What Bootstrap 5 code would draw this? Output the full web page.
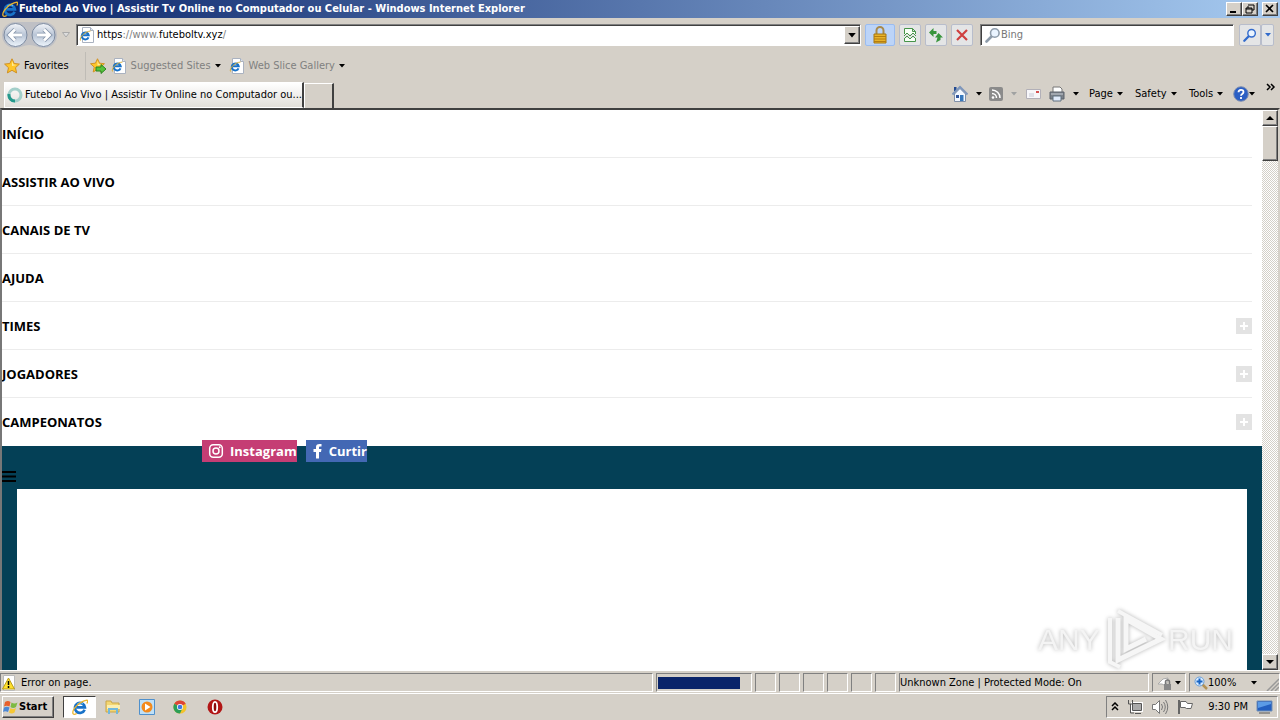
<!DOCTYPE html>
<html lang="pt-BR">
<head>
<meta charset="utf-8">
<meta name="viewport" content="width=device-width, initial-scale=1">
<title>Futebol Ao Vivo | Assistir Tv Online no Computador ou Celular</title>
<link href="https://cdn.jsdelivr.net/npm/bootstrap@5.3.0/dist/css/bootstrap.min.css" rel="stylesheet">
<style>
:root{--face:#d5d0c8;--shade:#808080;--dark:#404040}
body{font:11px/14px "DejaVu Sans Condensed","DejaVu Sans",sans-serif;color:#000;background:var(--face)}
button{font:inherit;color:inherit;background:none;border:0;padding:0;white-space:nowrap}
svg{display:block;flex:none}
.desktop{height:100vh;overflow:hidden}
.titlebar{height:18px;background:linear-gradient(90deg,#0a246a,#a6caf0);color:#fff;font-weight:700;padding:0 2px}
.raised{background:var(--face);border:1px solid;border-color:#fff var(--dark) var(--dark) #fff;box-shadow:inset -1px -1px var(--shade)}
.sunken{border:1px solid;border-color:var(--shade) #fff #fff var(--shade)}
.winbtn{width:16px;height:14px}
.navrow{height:34px;padding:0 6px 0 2px}
.field{height:22px;background:#fff;border:1px solid;border-color:var(--shade) #fff #fff var(--shade);box-shadow:inset 1px 1px var(--dark)}
.field input{border:0;outline:0;background:none;min-width:0;padding:0;font:inherit}
.address{margin-left:2px;padding-left:2px;gap:2px}
.dropper{width:16px;height:18px}
.host{color:#808080}
.host b{font-weight:400;color:#000}
.searchbox{width:254px;margin:0 5px 0 7px}
.searchbox svg{color:#8e9cab}
.searchbox input{color:#777}
.searchbox input::placeholder{color:#777;opacity:1}
.tool{width:22px;height:22px;border:1px solid #b8bdcb;border-radius:2px;background:#e4e5e6;margin-right:4px}
.blue{color:#326bcc}.slim{width:13px}
.lockbtn{width:30px;background:#bcd4f8;border-color:#9abcf0}
.favrow{height:28px;padding-left:4px;color:#808080}
.tabrow{height:28px;padding-left:4px}
.pagetab{width:300px;height:26px;padding-left:2px;gap:2px;background:linear-gradient(#fff,#e2dfda);border:1px solid #fff;border-right:2px solid var(--dark)}
.newtab{width:30px;height:25px;border:1px solid #fff;border-right:2px solid var(--dark);border-bottom:0}
.cmd{display:flex;align-items:center;height:22px}
.w14{width:14px}.w23{width:23px}.w33{width:33px}.w37{width:37px}.w40{width:40px}.w44{width:44px}.w46{width:46px}.w54{width:54px}
.view{border:solid;border-width:2px 2px 0;border-color:var(--dark) var(--face) #fff #777;position:relative;min-height:0}
.site{font-family:"Open Sans","Noto Sans",sans-serif;font-size:13px;line-height:20px;font-weight:700;background:#fff}
.menu a{height:48px;border-bottom:1px solid #ececec;margin-right:10px;color:#000;text-decoration:none;text-transform:uppercase}
.menu li:last-child a{border-bottom-color:transparent}
.plus{width:16px;height:16px}
.hero{background:#044056}
.social{margin-top:-6px;padding-left:200px;gap:9px}
.social a{height:22px;color:#fff;text-decoration:none;padding-left:6px;gap:6px}
.insta{background:#c53d74}.fb{background:#4368b4}
.burger{padding:9px 0 7px}
.paper{background:#fff;margin:0 15px}
.scroll{width:16px;background:repeating-conic-gradient(#fff 0 25%,#d4d0c8 0 50%) 0 0/2px 2px}
.scroll button{height:16px;width:16px}
.thumb{height:35px}
.watermark{position:absolute;right:42px;bottom:0;filter:drop-shadow(0 0 2px #b4b4b4)}
.status{height:23px;border-top:1px solid #fff;padding-top:2px;gap:3px}
.status .sunken{height:19px}
.slot{width:21px}
.prog{width:96px;padding:3px 1px}
.prog div{background:#0a246a;width:82px;height:12px}
.zone{width:250px}.prot{width:34px}.zoomer{width:91px}
.taskbar{height:27px;border-top:1px solid #fff;padding:0 2px 1px}
.start{height:22px;width:52px;font-weight:700}
.active-app{width:33px;height:22px;background:#fff;border:1px solid;border-color:var(--dark) #fff #fff var(--dark);margin:0 9px}
.app{width:34px;height:22px}
.tray{width:172px;height:22px}
</style>
</head>
<body>
<svg width="0" height="0" class="position-absolute" aria-hidden="true">
<defs>
<symbol id="ie" viewBox="0 0 16 16"><path d="M12.6 10.7A5 5 0 1 1 12.9 8.3H4.5" fill="none" stroke="#1872c8" stroke-width="2.7"/><path d="M5 5.5A4 4 0 0 1 11 5" fill="none" stroke="#77c6f3" stroke-width="1"/><path d="M1.2 15C-.8 11 7 2.5 15 1.2c1 .3.6 2-.2 3.300M1.2 15c1 .6 2.300.2 3.500-.500" fill="none" stroke="#eab42d" stroke-width="1.300"/></symbol>
<symbol id="iepage" viewBox="0 0 16 16"><path d="M3.500.5h8l3 3v12h-11z" fill="#fff" stroke="#aab2c0"/><path d="M11.500.5v3h3" fill="#dde5ef" stroke="#aab2c0"/><path d="M9.500 10.300A3.500 3.500 0 1 1 9.700 8.300H4" fill="none" stroke="#1872c8" stroke-width="2"/><path d="M1.500 13.500C0 10 6 4.500 11.500 4" fill="none" stroke="#d7ae38"/></symbol>
<symbol id="dn" viewBox="0 0 6 4"><path d="M0 0h6L3 3.500z" fill="currentColor"/></symbol>
<symbol id="star" viewBox="0 0 16 16"><path d="M8 .8l2.200 4.700 5.200.6-3.900 3.600 1.100 5.200L8 12.300l-4.600 2.600 1.100-5.200L.6 6.100l5.200-.6z" fill="#ffc629" stroke="#cf8f23"/><path d="M8 3l1.400 3.500 3.200.4L8 8z" fill="#ffec9a"/></symbol>
<symbol id="glass" viewBox="0 0 16 16"><path d="M1.500 14.500l5-5" stroke="currentColor" stroke-width="2.600" stroke-linecap="round"/><circle cx="9.800" cy="6" r="4.300" fill="#eaf4ff" stroke="currentColor" stroke-width="1.600"/></symbol>
<symbol id="plus" viewBox="0 0 16 16"><path fill="#e3e3e3" d="M0 0h16v16H0z"/><path d="M8 4v8M4 8h8" stroke="#fff" stroke-width="2"/></symbol>
</defs>
</svg>
<div class="desktop d-flex flex-column">
<header>
  <div class="titlebar d-flex align-items-center">
    <svg width="16" height="16"><use href="#ie"/></svg>
    <span class="flex-grow-1 text-nowrap">&#8202;Futebol Ao Vivo | Assistir Tv Online no Computador ou Celular - Windows Internet Explorer</span>
    <button class="winbtn raised" aria-label="Minimize"><svg width="14" height="12"><path d="M3 9h6" stroke="#000" stroke-width="2"/></svg></button>
    <button class="winbtn raised" aria-label="Restore"><svg width="14" height="12"><path d="M5 2h6M5 3v2m6-3v5H9M3 5h6v5H3zM3 6h6" fill="none" stroke="#000"/></svg></button>
    <button class="winbtn raised ms-1" aria-label="Close"><svg width="14" height="12"><path d="M3 2l7 7m0-7L3 9" stroke="#000" stroke-width="1.600"/></svg></button>
  </div>
  <div class="navrow d-flex align-items-center">
    <button aria-label="Back and forward"><svg width="56" height="28"><defs><linearGradient id="orb" x2="0" y2="1"><stop stop-color="#f3f5f9"/><stop offset=".5" stop-color="#b9c5d6"/><stop offset="1" stop-color="#eef5fc"/></linearGradient></defs><path d="M13 1h29a13 13 0 0 1 0 26c-6 0-9-3-14.500-3S19 27 13 27a13 13 0 0 1 0-26z" fill="#bfc0c5"/><g fill="url(#orb)" stroke="#7d8ba1"><circle cx="13.500" cy="14" r="11.500"/><circle cx="41.500" cy="14" r="11.500"/></g><path d="M20 14H8m5-5.500L7.500 14l5.500 5.500M35 14h12m-5-5.500l5.500 5.500-5.500 5.500" fill="none" stroke="#8594aa" stroke-width="4.500"/><path d="M20 14H8m5-5.500L7.500 14l5.500 5.500M35 14h12m-5-5.500l5.500 5.500-5.500 5.500" fill="none" stroke="#fff" stroke-width="2.800"/></svg></button>
    <svg width="8" height="6" viewBox="0 0 8 6" class="mx-1"><path d="M.5.500h7L4 5z" fill="#ddd" stroke="#aaa"/></svg>
    <div class="field address d-flex align-items-center flex-grow-1">
      <svg width="16" height="16"><use href="#iepage"/></svg>
      <a href="#" class="host flex-grow-1 text-decoration-none"><b>https</b>://www.<b>futeboltv.xyz</b>/</a>
      <button class="raised dropper d-flex align-items-center justify-content-center" aria-label="Show addresses"><svg width="8" height="5"><use href="#dn"/></svg></button>
    </div>
    <button class="tool lockbtn ms-1 d-flex align-items-center justify-content-center" aria-label="Security report"><svg width="16" height="18" viewBox="0 0 16 18"><path d="M4.500 9V4.500a3.500 3.500 0 0 1 7 0V9" fill="none" stroke="#a88a4c" stroke-width="2"/><path d="M2 8h12v9H2z" fill="#e8b32a" stroke="#a57611"/><path d="M2 10.500h12M2 13h12M2 15.500h12" stroke="#b47d10"/></svg></button>
    <button class="tool d-flex align-items-center justify-content-center" aria-label="Compatibility view"><svg width="14" height="16"><path d="M1.500 7V1.500h8l3 3V7M1.500 11v3.500h11V11M9.500 1.500v3h3" fill="#f7fff6" stroke="#47944a"/><path d="M1 9l3-3 3 3 3-3 3 3M1 12l3-3 3 3 3-3 3 3" fill="none" stroke="#47944a"/></svg></button>
    <button class="tool d-flex align-items-center justify-content-center" aria-label="Refresh"><svg width="16" height="16"><path d="M5.500 1L1 5.500 5.500 10V7h3V4h-3zM10.500 6l4.500 4.500h-2.500V13L8 15.500 9.500 10.500H7z" fill="#38953c"/></svg></button>
    <button class="tool d-flex align-items-center justify-content-center me-0" aria-label="Stop"><svg width="14" height="14"><path d="M2 2l10 10M12 2L2 12" stroke="#cf3f3f" stroke-width="2.200"/></svg></button>
    <div class="field searchbox d-flex align-items-center ps-1"><svg width="16" height="16"><use href="#glass"/></svg><input type="text" class="flex-grow-1" placeholder="Bing" aria-label="Search"></div>
    <button class="tool blue m-0 d-flex align-items-center justify-content-center" aria-label="Go"><svg width="14" height="14"><use href="#glass"/></svg></button>
    <button class="tool blue slim m-0 d-flex align-items-center justify-content-center" aria-label="Search options"><svg width="6" height="4"><use href="#dn"/></svg></button>
  </div>
  <div class="favrow d-flex align-items-center">
    <button class="d-flex align-items-center text-black gap-1"><svg width="16" height="16"><use href="#star"/></svg>Favorites</button>
    <div class="vr ms-3 me-1"></div>
    <button aria-label="Add to favorites bar"><svg width="17" height="16"><use href="#star" width="15" height="15"/><path d="M6 9h5V6.500l5 4.500-5 4.500V13H6z" fill="#56c23d" stroke="#2b8421"/></svg></button>
    <button class="d-flex align-items-center ms-1 gap-1"><svg width="16" height="16"><use href="#iepage"/></svg>Suggested Sites <svg width="6" height="4" class="text-black"><use href="#dn"/></svg></button>
    <button class="d-flex align-items-center ms-2 gap-1"><svg width="16" height="16"><use href="#iepage"/></svg>Web Slice Gallery <svg width="6" height="4" class="text-black"><use href="#dn"/></svg></button>
  </div>
  <div class="tabrow d-flex align-items-end">
    <button class="pagetab d-flex align-items-center"><svg width="16" height="16"><circle cx="8" cy="8" r="6" fill="none" stroke="#a3cfca" stroke-width="3"/><path d="M2 7a6 6 0 0 0 6 7" fill="none" stroke="#25998c" stroke-width="3"/></svg><span>Futebol Ao Vivo | Assistir Tv Online no Computador ou...</span></button>
    <button class="newtab" aria-label="New tab"></button>
    <nav class="d-flex align-self-center ms-auto" aria-label="Commands">
      <button class="cmd w37 gap-2" aria-label="Home"><svg width="16" height="18" viewBox="0 0 16 18"><path d="M2.500 9v7.500h11V9L8 3.500z" fill="#f3f8ff" stroke="#8090a8"/><path d="M2 2h2.500v4H2z" fill="#234a91"/><path d="M.5 9.500L8 2l7.500 7.500" fill="none" stroke="#7e96bb" stroke-width="2"/><path d="M8 10h3.500v6H8z" fill="#3678bc"/><path d="M4 10h3v3H4z" fill="#2f549b"/></svg><svg width="6" height="4"><use href="#dn"/></svg></button>
      <button class="cmd w37 gap-2" aria-label="Feeds"><svg width="14" height="14"><rect width="14" height="14" rx="2" fill="#8b8b8b"/><circle cx="4" cy="10.500" r="1.300" fill="#fff"/><path d="M3 6.500a4.500 4.500 0 0 1 4.500 4.500M3 3a8 8 0 0 1 8 8" fill="none" stroke="#fff" stroke-width="1.500"/></svg><svg width="6" height="4" class="text-secondary opacity-50"><use href="#dn"/></svg></button>
      <button class="cmd w23" aria-label="Read mail"><svg width="15" height="10"><path d="M.5.500h14v9H.5z" fill="#f7f7fa" stroke="#b2b0b8"/><path d="M10 3h3" stroke="#d45151" stroke-width="2"/><path d="M3 5h5M3 7h5" stroke="#c5c8d5"/></svg></button>
      <button class="cmd w40 gap-2" aria-label="Print"><svg width="16" height="16"><path d="M4 6V1h7l2 2v3" fill="#fff" stroke="#777"/><path d="M1 6h14v7H1z" fill="#7c828a" stroke="#5c636c"/><path d="M2 8h12" stroke="#c7ccd4"/><path d="M4 10h8v5H4z" fill="#e0eafa" stroke="#61707f"/></svg><svg width="6" height="4"><use href="#dn"/></svg></button>
      <button class="cmd w46 gap-1">Page<svg width="6" height="4"><use href="#dn"/></svg></button>
      <button class="cmd w54 gap-1">Safety<svg width="6" height="4"><use href="#dn"/></svg></button>
      <button class="cmd w44 gap-1">Tools<svg width="6" height="4"><use href="#dn"/></svg></button>
      <button class="cmd w33" aria-label="Help"><svg width="16" height="16"><circle cx="8" cy="8" r="7.300" fill="#2b5fc4" stroke="#8190b0"/><path d="M5.500 6.300C5.500 3 10.500 3 10.500 6c0 2-2.500 1.800-2.500 3.700M8 11v2" fill="none" stroke="#fff" stroke-width="1.800"/></svg><svg width="6" height="4"><use href="#dn"/></svg></button>
      <button class="cmd w14 align-items-start" aria-label="More commands"><svg width="10" height="8"><path d="M1 1l3 3-3 3m4-6l3 3-3 3" fill="none" stroke="#000" stroke-width="1.500"/></svg></button>
    </nav>
  </div>
</header>
<main class="view d-flex flex-grow-1">
  <div class="site d-flex flex-column flex-grow-1 overflow-hidden">
    <ul class="menu list-unstyled m-0">
      <li><a href="#" class="d-flex align-items-center">Início</a></li>
      <li><a href="#" class="d-flex align-items-center">Assistir ao vivo</a></li>
      <li><a href="#" class="d-flex align-items-center">Canais de TV</a></li>
      <li><a href="#" class="d-flex align-items-center">Ajuda</a></li>
      <li><a href="#" class="d-flex align-items-center justify-content-between">Times<svg class="plus"><use href="#plus"/></svg></a></li>
      <li><a href="#" class="d-flex align-items-center justify-content-between">Jogadores<svg class="plus"><use href="#plus"/></svg></a></li>
      <li><a href="#" class="d-flex align-items-center justify-content-between">Campeonatos<svg class="plus"><use href="#plus"/></svg></a></li>
    </ul>
    <div class="hero d-flex flex-column flex-grow-1">
      <div class="social d-flex">
        <a href="#" class="insta d-flex align-items-center"><svg width="16" height="16"><rect x="1.700" y="1.700" width="12.600" height="12.600" rx="3.500" fill="none" stroke="#fff" stroke-width="1.500"/><circle cx="8" cy="8" r="3" fill="none" stroke="#fff" stroke-width="1.500"/><circle cx="11.700" cy="4.300" r="1" fill="#fff"/></svg>Instagram</a>
        <a href="#" class="fb d-flex align-items-center"><svg width="11" height="16"><path d="M4 15.500V9H1.500V6H4V4c0-2.500 1.500-3.500 5.500-3v2.500C7.500 3.300 7 3.500 7 4.500V6h2.500L9 9H7v6.500z" fill="#fff"/></svg>Curtir</a>
      </div>
      <button class="burger align-self-start" aria-label="Menu"><svg width="14" height="11"><path d="M0 1h14M0 5.500h14M0 10h14" stroke="#000" stroke-width="2"/></svg></button>
      <div class="paper flex-grow-1"></div>
    </div>
  </div>
  <div class="scroll d-flex flex-column">
    <button class="raised d-flex align-items-center justify-content-center" aria-label="Scroll up"><svg width="8" height="4"><path d="M0 4h8L4 0z"/></svg></button>
    <div class="thumb raised"></div>
    <button class="raised d-flex align-items-center justify-content-center mt-auto" aria-label="Scroll down"><svg width="8" height="4"><path d="M0 0h8L4 4z"/></svg></button>
  </div>
  <svg class="watermark" width="202" height="64"><g fill="#f4f4f4" font-family="Liberation Sans,sans-serif" font-size="30"><text x="4" y="44">ANY</text><text x="134" y="44">RUN</text></g><path d="M84 12v42l43-21-35-20v30l20-10" fill="none" stroke="#f6f6f6" stroke-width="5"/><path d="M76 12v44l10 5M84 5l44 24" fill="none" stroke="#f6f6f6" stroke-width="4"/></svg>
</main>
<footer>
  <div class="status d-flex">
    <div class="sunken flex-grow-1 d-flex align-items-center gap-1"><svg width="16" height="16"><path d="M2.500.5h11v15h-11z" fill="#fff" stroke="#bbb"/><path d="M7.500 3l6 11h-12z" fill="#ffe02b" stroke="#b89b19"/><path d="M7.500 6v4m0 1v2" stroke="#000" stroke-width="1.500"/></svg>Error on page.</div>
    <div class="sunken prog"><div></div></div>
    <div class="sunken slot"></div><div class="sunken slot"></div><div class="sunken slot"></div><div class="sunken slot"></div><div class="sunken slot"></div><div class="sunken slot"></div>
    <div class="sunken zone d-flex align-items-center text-nowrap">Unknown Zone | Protected Mode: On</div>
    <button class="sunken prot d-flex align-items-center justify-content-between px-1" aria-label="InPrivate settings"><svg width="16" height="16"><path d="M1 9l5-5 5-1-2 8-4-2z" fill="#fff" stroke="#aaa"/><path d="M8.500 9V7a2 2 0 0 1 4 0v2" fill="none" stroke="#777" stroke-width="1.500"/><path d="M7 9h7v6H7z" fill="#888"/></svg><svg width="6" height="4"><use href="#dn"/></svg></button>
    <button class="sunken zoomer d-flex align-items-center ps-1"><svg width="14" height="14"><path d="M8 8l5 5" stroke="#b39256" stroke-width="2.500"/><circle cx="5.500" cy="5.500" r="4.500" fill="#d7eaff" stroke="#6a9fd8"/><path d="M5.500 2.500v6m-3-3h6" stroke="#1764c4" stroke-width="2"/></svg><span class="flex-grow-1 text-start">100%</span><svg width="6" height="4" class="me-2"><use href="#dn"/></svg><svg width="14" height="17"><path d="M2 17L14 5M6 17l8-8M10 17l4-4" stroke="#999" stroke-width="1.500"/></svg></button>
  </div>
  <div class="taskbar d-flex align-items-center">
    <button class="start raised d-flex align-items-center"><svg width="16" height="16"><path d="M2 3q3-2 5.500 0L6.500 7.500q-3-1.500-5.500 0z" fill="#e8602c"/><path d="M8.500 3.500q3 2 6 0L13 8q-3 2-5.500 0z" fill="#7dba43"/><path d="M1 8.500q3-1.500 5.500 0L5 13q-3-1.500-5 0z" fill="#4b88d6"/><path d="M7.500 9q2.500 2 5.500 0l-1.500 4.500q-3 2-5.500 0z" fill="#f5c735"/></svg>Start</button>
    <button class="active-app d-flex align-items-center justify-content-center" aria-label="Internet Explorer"><svg width="16" height="16"><use href="#ie"/></svg></button>
    <button class="app d-flex align-items-center" aria-label="Explorer"><svg width="16" height="16"><path d="M1 2h5l1 2h7v9H1z" fill="#f3d673" stroke="#c9a548"/><path d="M2 6h13v4H2z" fill="#fbeeb0"/><path d="M3 15V9h10v6h-2v-4H5v4z" fill="#72b8dc"/></svg></button>
    <button class="app d-flex align-items-center" aria-label="Media Player"><svg width="16" height="16"><path d="M.5.500h15v15H.5z" fill="#bfe0f7" stroke="#4f90cc"/><circle cx="8" cy="8" r="5.500" fill="#f38a1c"/><path d="M6 4.500v7L11.500 8z" fill="#fff"/></svg></button>
    <button class="app d-flex align-items-center" aria-label="Chrome"><svg width="14" height="14" viewBox="0 0 16 16"><circle cx="8" cy="8" r="7.500" fill="#f3c32b"/><path d="M8 8L1.500 4.200a7.500 7.500 0 0 1 13 0z" fill="#dd4437"/><path d="M8 8L1.500 4.200A7.500 7.500 0 0 0 8 15.500L11 9z" fill="#2c9e57"/><circle cx="8" cy="8" r="3.500" fill="#fff"/><circle cx="8" cy="8" r="2.700" fill="#3f78df"/></svg></button>
    <button class="app d-flex align-items-center" aria-label="Opera"><svg width="16" height="16"><circle cx="8" cy="8" r="7.500" fill="#b21616"/><ellipse cx="8" cy="8" rx="2.200" ry="5.200" fill="#8d0b0b" stroke="#fff" stroke-width="1.800"/></svg></button>
    <div class="tray sunken ms-auto d-flex align-items-center px-1">
      <svg width="8" height="10"><path d="M1 4l3-3 3 3M1 8l3-3 3 3" fill="none" stroke="#000" stroke-width="1.500"/></svg>
      <svg width="16" height="16" class="ms-2"><path d="M5 4h10v8H5z" fill="#aaa" stroke="#fff" stroke-width="2"/><path d="M5.500 4.500h9v7h-9zM8 14.500h6M1.500 1v4h4V1M3.500 5v9H7" fill="none" stroke="#555"/></svg>
      <svg width="18" height="16" class="ms-2"><path d="M1.500 5.500h3l4-4v13l-4-4h-3z" fill="#fff" stroke="#777"/><path d="M10.500 5q2 3 0 6m2-8q3.500 5 0 10m2-12q4.500 7 0 14" fill="none" stroke="#777"/></svg>
      <svg width="17" height="16" class="ms-2"><path d="M2 1v14" stroke="#666" stroke-width="2"/><path d="M3.500 2.500H9l1.500 2h5L14 9.500H9.500L8 8.500H3.500z" fill="#fff" stroke="#666"/></svg>
      <time class="ms-auto me-2 text-nowrap">9:30 PM</time>
      <svg width="17" height="14"><path d="M1 1h15v10H1z" fill="#235fc0" stroke="#7290b5"/><path d="M2 2h13v2L2 8z" fill="#5b9be6"/><path d="M3 13h11" stroke="#555"/></svg>
    </div>
  </div>
</footer>
</div>
<script src="https://cdn.jsdelivr.net/npm/bootstrap@5.3.0/dist/js/bootstrap.bundle.min.js"></script>
</body>
</html>
